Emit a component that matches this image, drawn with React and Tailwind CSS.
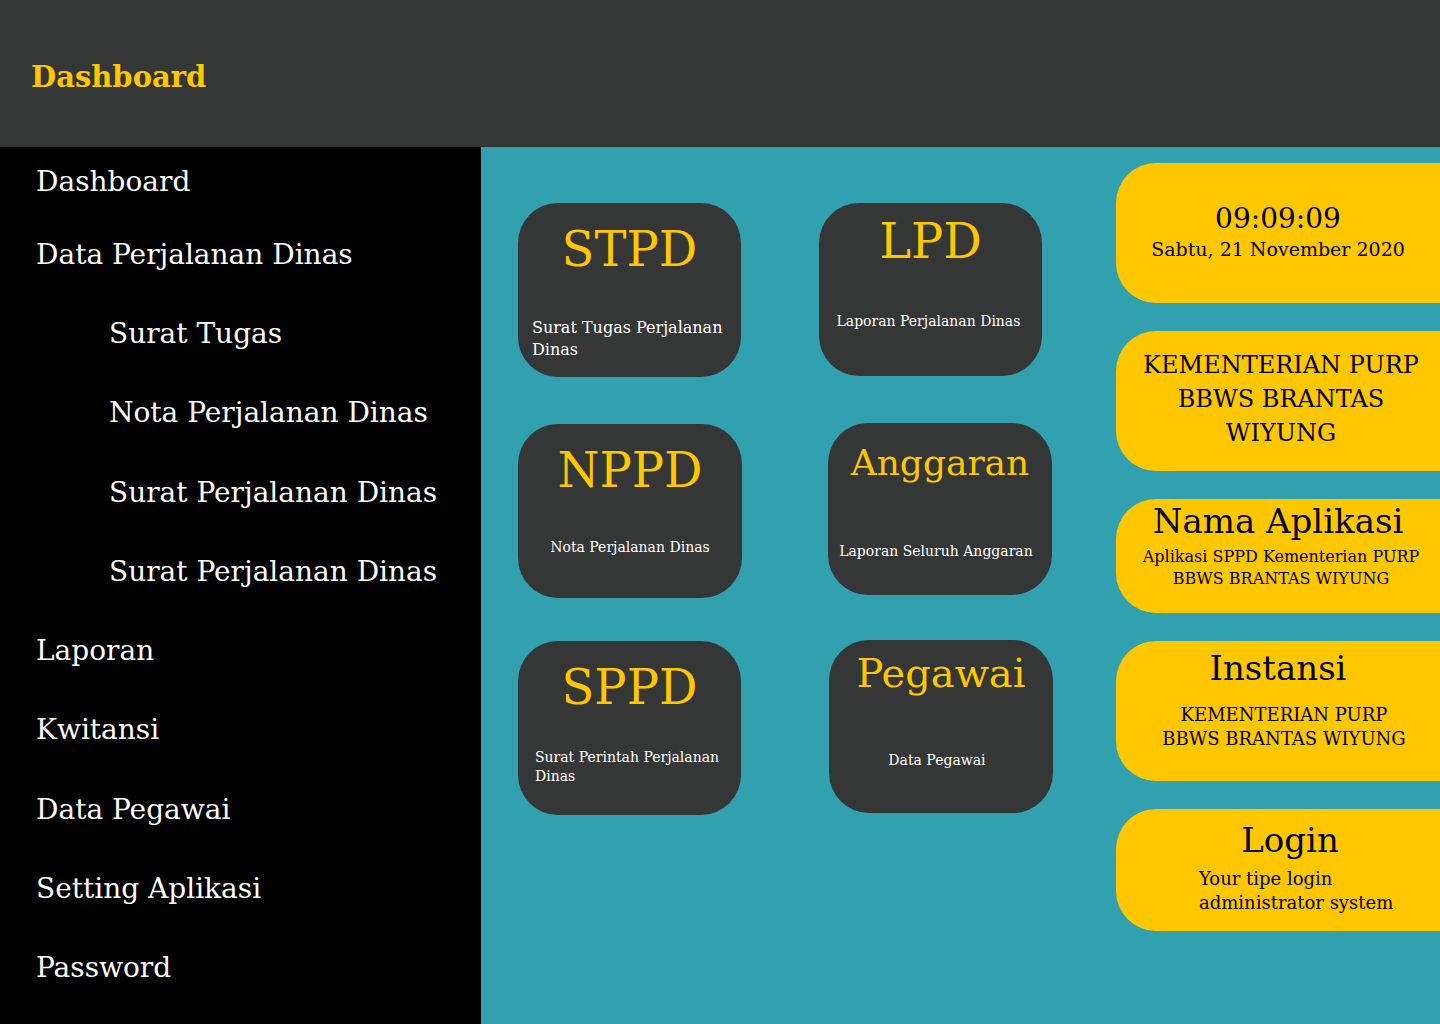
const topLinks = ["Data Perjalanan Dinas"];
const subLinks = ["Surat Tugas", "Nota Perjalanan Dinas", "Surat Perjalanan Dinas", "Surat Perjalanan Dinas"];
const bottomLinks = ["Laporan", "Kwitansi", "Data Pegawai", "Setting Aplikasi", "Password"];

const menu = [
  ...topLinks.map((label) => ({ label, sub: false })),
  ...subLinks.map((label) => ({ label, sub: true })),
  ...bottomLinks.map((label) => ({ label, sub: false })),
];

function Tile({ title, text, box, titleClass, textClass }) {
  return (
    <a href="#" className={`block rounded-[40px] bg-[#353736] ${box}`}>
      <h2 className={`text-center text-[#ffc700] ${titleClass}`}>{title}</h2>
      <p className={`text-white ${textClass}`}>{text}</p>
    </a>
  );
}

function Panel({ className, children }) {
  return <section className={`rounded-l-[40px] bg-[#ffc700] text-center text-black ${className}`}>{children}</section>;
}

export default function App() {
  return (
    <div className="flex min-h-screen flex-col bg-[#31a1b0] font-['DejaVu_Serif',serif]">
      <header className="border-b border-[#2b2d2c] bg-[#353736] pt-[57px] pb-[49px] pl-[31px]">
        <h1 className="text-[29px] leading-10 font-bold text-[#ffc700]">Dashboard</h1>
      </header>

      <div className="flex flex-1">
        <nav className="flex w-[33.4%] shrink-0 flex-col bg-black pt-[15px] pb-9 pl-9 text-[28px] leading-10 whitespace-nowrap text-white">
          <a href="#">Dashboard</a>
          <ul className="mt-[33px] flex flex-1 flex-col justify-between">
            {menu.map((item, i) => (
              <li key={i} className={item.sub ? "pl-[73px]" : ""}>
                <a href="#">{item.label}</a>
              </li>
            ))}
          </ul>
        </nav>

        <main className="flex flex-1 gap-[78px] pt-14 pl-[37px]">
          <div className="flex flex-col">
            <Tile
              title="STPD"
              text="Surat Tugas Perjalanan Dinas"
              box="min-h-[174px] w-[223px] pt-[18px]"
              titleClass="text-5xl leading-14"
              textClass="mt-10 pl-[14px] text-base leading-[22px]"
            />
            <Tile
              title="NPPD"
              text="Nota Perjalanan Dinas"
              box="mt-[47px] min-h-[174px] w-[224px] pt-[18px]"
              titleClass="text-5xl leading-14"
              textClass="mt-10 text-center text-sm leading-[19px]"
            />
            <Tile
              title="SPPD"
              text="Surat Perintah Perjalanan Dinas"
              box="mt-[43px] min-h-[174px] w-[223px] pt-[18px]"
              titleClass="text-5xl leading-14"
              textClass="mt-[33px] pl-[17px] text-sm leading-[19px]"
            />
          </div>
          <div className="-ml-px flex flex-col">
            <Tile
              title="LPD"
              text="Laporan Perjalanan Dinas"
              box="min-h-[173px] w-[223px] pt-[10px]"
              titleClass="text-5xl leading-14"
              textClass="mt-[43px] pr-1 text-center text-sm leading-[19px]"
            />
            <Tile
              title="Anggaran"
              text="Laporan Seluruh Anggaran"
              box="mt-[47px] ml-[9px] min-h-[172px] w-[224px] pt-[18px]"
              titleClass="text-4xl leading-11"
              textClass="mt-[57px] pr-2 text-center text-sm leading-[19px]"
            />
            <Tile
              title="Pegawai"
              text="Data Pegawai"
              box="mt-[45px] ml-[10px] min-h-[173px] w-[224px] pt-[9px]"
              titleClass="text-[40px] leading-12"
              textClass="mt-[54px] pr-2 text-center text-sm leading-[19px]"
            />
          </div>
        </main>

        <aside className="flex w-[22.5%] shrink-0 flex-col gap-7 pt-4">
          <Panel className="min-h-[140px] pt-[38px]">
            <p className="text-[28px] leading-9">09:09:09</p>
            <p className="text-[19px] leading-6">Sabtu, 21 November 2020</p>
          </Panel>
          <Panel className="min-h-[140px] pt-[17px] pl-[6px]">
            <p className="text-2xl leading-[34px]">
              KEMENTERIAN PURP
              <br />
              BBWS BRANTAS
              <br />
              WIYUNG
            </p>
          </Panel>
          <Panel className="min-h-[114px]">
            <h2 className="text-[34px] leading-11">Nama Aplikasi</h2>
            <p className="mt-[3px] pl-[6px] text-base leading-[22px]">
              Aplikasi SPPD Kementerian PURP
              <br />
              BBWS BRANTAS WIYUNG
            </p>
          </Panel>
          <Panel className="min-h-[140px] pt-[5px]">
            <h2 className="text-[34px] leading-11">Instansi</h2>
            <p className="mt-[13px] pl-3 text-lg leading-6">
              KEMENTERIAN PURP
              <br />
              BBWS BRANTAS WIYUNG
            </p>
          </Panel>
          <Panel className="min-h-[122px] pt-[9px]">
            <h2 className="pl-6 text-[34px] leading-11">Login</h2>
            <p className="mt-[5px] pl-[83px] text-left text-lg leading-6">
              Your tipe login
              <br />
              administrator system
            </p>
          </Panel>
        </aside>
      </div>
    </div>
  );
}
